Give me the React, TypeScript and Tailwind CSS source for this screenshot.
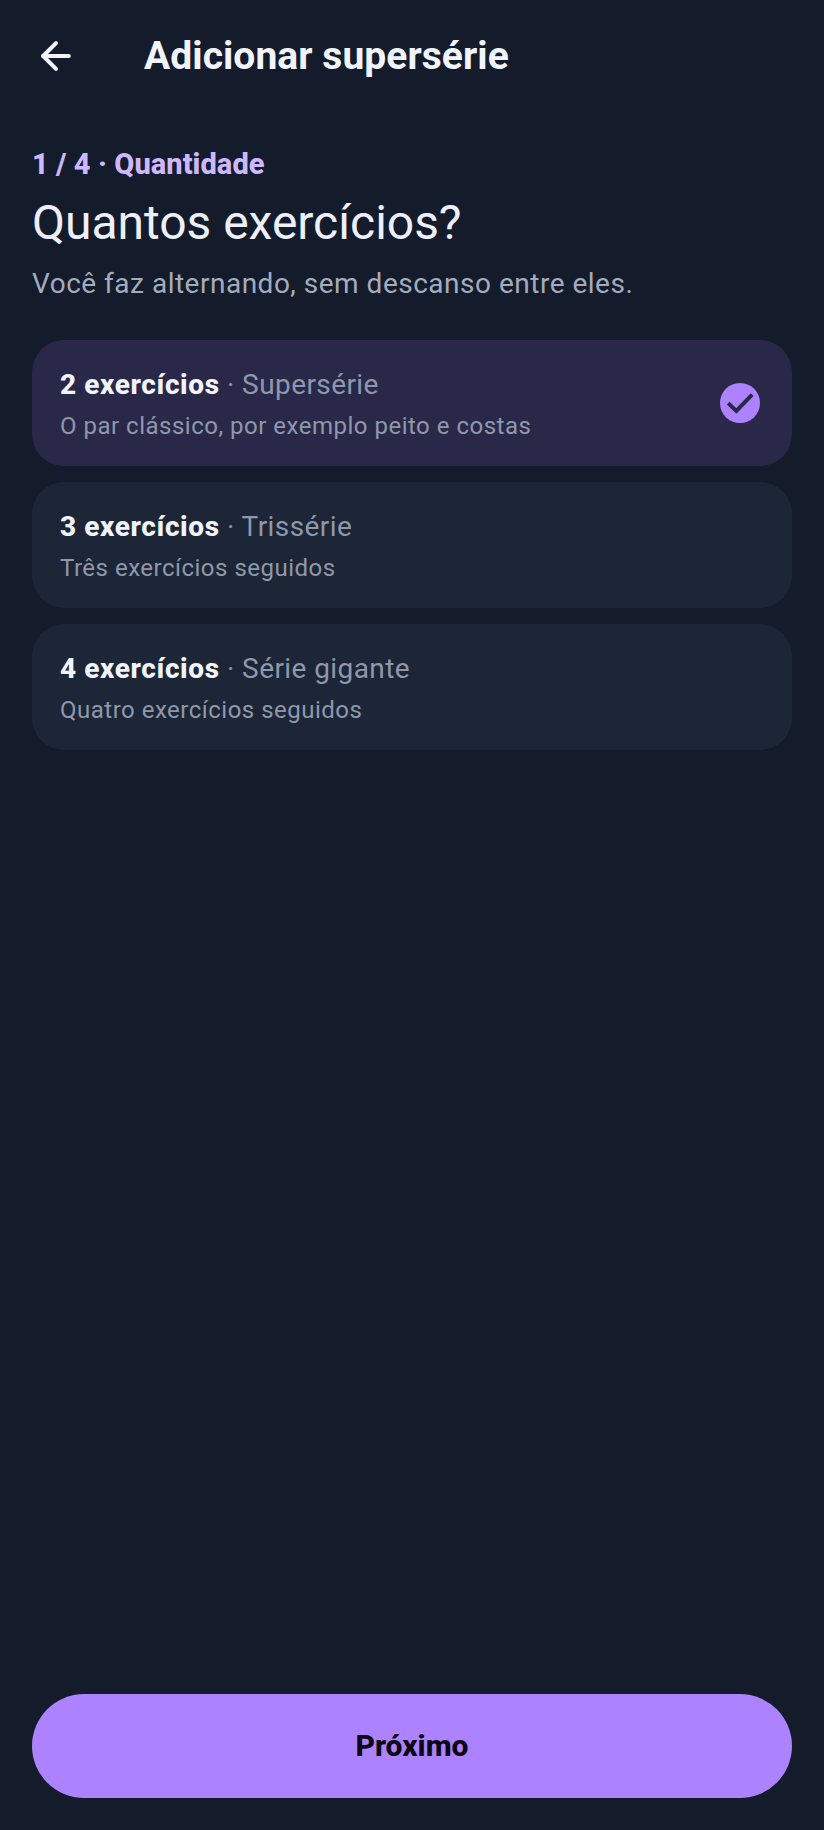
import React from "react";
import { ArrowLeft } from "lucide-react";

interface OptionProps {
  count: number;
  name: string;
  description: string;
  selected?: boolean;
}

const options: OptionProps[] = [
  { count: 2, name: "Supersérie", description: "O par clássico, por exemplo peito e costas", selected: true },
  { count: 3, name: "Trissérie", description: "Três exercícios seguidos" },
  { count: 4, name: "Série gigante", description: "Quatro exercícios seguidos" },
];

const OptionCard: React.FC<OptionProps> = ({ count, name, description, selected }) => (
  <div
    className={
      selected
        ? "flex h-[126px] items-center justify-between rounded-[32px] bg-[#2a2848] pl-7 pr-8"
        : "flex h-[126px] items-center justify-between rounded-[32px] bg-[#1c2636] pl-7 pr-8"
    }
  >
    <div className="flex flex-col gap-[7px] pt-[3px]">
      <div className="text-[28px] leading-[36px] tracking-[0.42px] text-[#8f98ab]">
        <span className="font-extrabold tracking-[0.6px] text-[#f1f4fd]">{count} exercícios</span> · {name}
      </div>
      <div className="text-[24px] leading-[32px] tracking-[0.5px] text-[#8f98ab]">{description}</div>
    </div>
    {selected && (
      <div className="flex h-10 w-10 items-center justify-center rounded-full bg-[#ac82fe]">
        <svg viewBox="0 0 24 24" className="h-10 w-10" fill="none" stroke="#2a2848" strokeWidth="2.4">
          <path d="M4.9 12.1 L9.8 16.7 L19.3 7" />
        </svg>
      </div>
    )}
  </div>
);

export default function App() {
  return (
    <div className="flex h-[1830px] w-[824px] flex-col bg-[#141b2b] font-['Roboto',sans-serif]">
      {/* Top bar */}
      <div className="flex h-28 items-center pl-[34px]">
        <ArrowLeft className="h-[44px] w-[44px] text-[#f1f4fd]" strokeWidth={2.2} />
        <h1 className="ml-[66px] text-[39px] tracking-[0.05px] font-bold text-[#f1f4fd]">Adicionar supersérie</h1>
      </div>

      <div className="flex flex-1 flex-col px-8 pt-[34px]">
        <div className="text-[29px] leading-[36px] tracking-[0.06px] font-extrabold text-[#cdb8fd]">1 / 4 · Quantidade</div>
        <h2 className="mt-[11px] text-[48px] leading-[60px] tracking-[-0.03px] text-[#edf0fb]">Quantos exercícios?</h2>
        <p className="mt-[13px] text-[28px] leading-[36px] tracking-[0.5px] text-[#a3acbd]">
          Você faz alternando, sem descanso entre eles.
        </p>

        <div className="mt-[38px] flex flex-col gap-4">
          {options.map((o) => (
            <OptionCard key={o.count} {...o} />
          ))}
        </div>

        <button className="mt-auto mb-8 h-[104px] w-full rounded-full bg-[#ac82fe] pb-[2px] text-[30px] font-extrabold text-[#0b0716]">
          Próximo
        </button>
      </div>
    </div>
  );
}
